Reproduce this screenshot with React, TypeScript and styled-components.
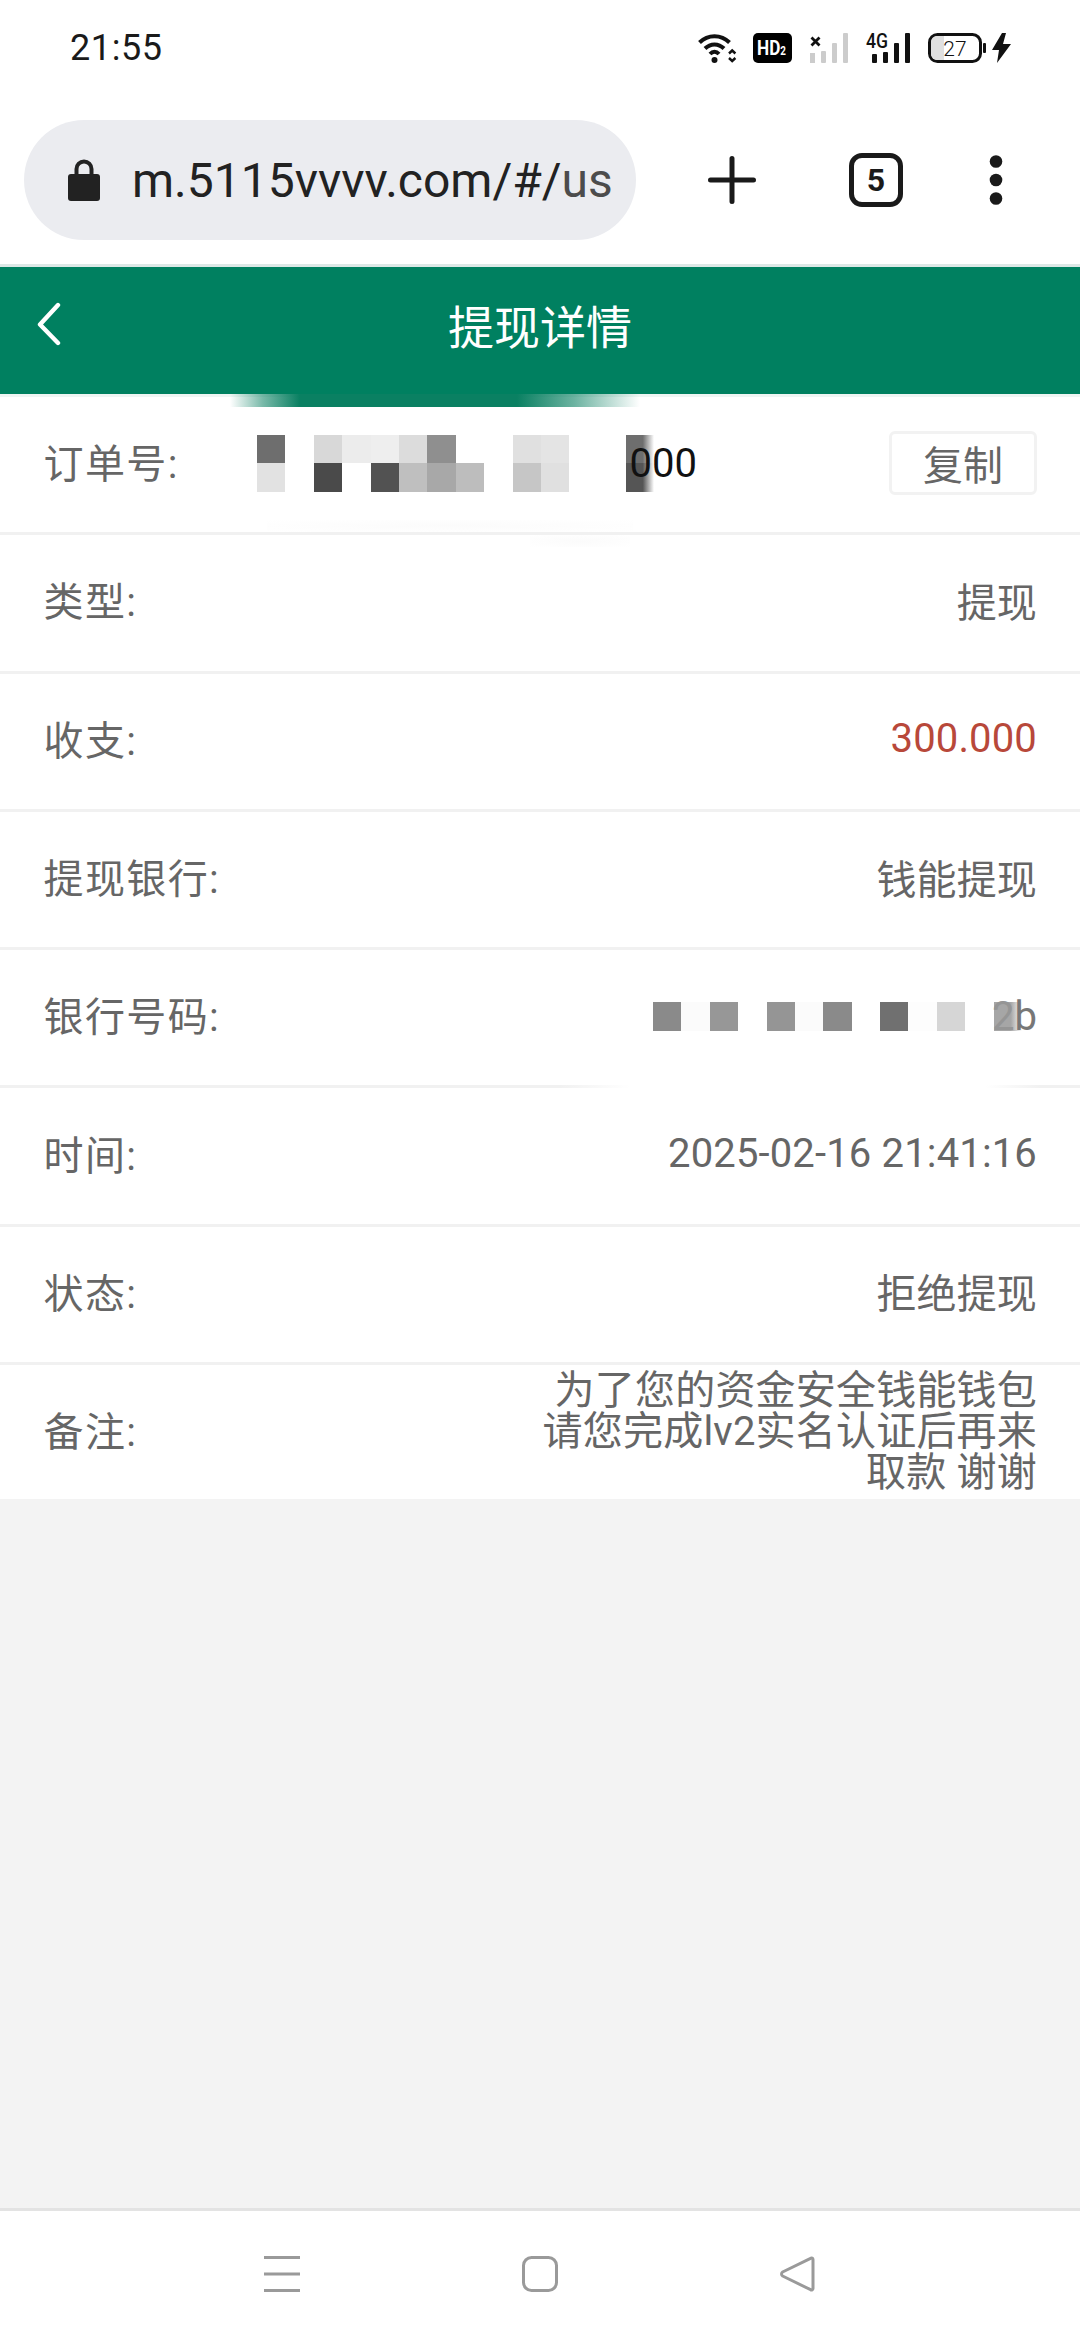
import styled, { createGlobalStyle } from 'styled-components'

const GlobalStyle = createGlobalStyle`
  html, body {
    margin: 0;
    padding: 0;
    background: #fff;
  }
  * {
    box-sizing: border-box;
  }
`

const Page = styled.div`
  width: 1080px;
  height: 2340px;
  display: flex;
  flex-direction: column;
  background: #f3f3f3;
  font-family: Roboto, "Noto Sans CJK SC", sans-serif;
  overflow: hidden;
`

const StatusBar = styled.div`
  height: 96px;
  flex: none;
  display: flex;
  align-items: center;
  justify-content: space-between;
  background: #fff;
  padding: 0 69px 0 70px;
`
const Clock = styled.span`
  font-size: 36px;
  letter-spacing: 0.6px;
  color: #1a1a1a;
`
const StatusIcons = styled.div`
  display: flex;
  align-items: flex-start;
`
const StatusIcon = styled.svg<{ $gap?: number }>`
  display: block;
  overflow: visible;
  margin-left: ${p => p.$gap ?? 0}px;
`

const UrlRow = styled.div`
  height: 168px;
  flex: none;
  display: flex;
  align-items: center;
  background: #fff;
  padding-left: 24px;
`
const UrlPill = styled.div`
  width: 612px;
  height: 120px;
  border-radius: 60px;
  background: #ebecf0;
  display: flex;
  align-items: center;
  padding-left: 44px;
`
const UrlText = styled.span`
  margin-left: 32px;
  font-size: 48px;
  color: #222;
  white-space: nowrap;
`
const UrlFade = styled.span`
  color: #4c4c4c;
`
const PlusIcon = styled.svg`
  margin-left: 72px;
`
const TabCount = styled.div`
  margin-left: 93px;
  width: 54px;
  height: 54px;
  border: 5px solid #1a1a1a;
  border-radius: 13px;
  display: flex;
  align-items: center;
  justify-content: center;
  font-size: 32px;
  font-weight: 700;
  color: #1a1a1a;
`
const MenuDots = styled.svg`
  margin-left: 86px;
`

const TopLine = styled.div`
  height: 3px;
  flex: none;
  background: #dde8e6;
`
const Header = styled.header`
  height: 127px;
  flex: none;
  background: #008060;
  display: flex;
  align-items: center;
  justify-content: center;
  position: relative;
  padding-bottom: 13px;
`
const BackIcon = styled.svg`
  position: absolute;
  left: 36px;
  top: 35px;
`
const Title = styled.h1`
  margin: 0;
  font-size: 46px;
  font-weight: 400;
  color: #fff;
`
const HeaderLine = styled.div`
  height: 3px;
  flex: none;
  background: #eef5f3;
`

// smeared edge of the blur that runs under the green bar
const Smudge = styled.div`
  position: absolute;
  z-index: 2;
  left: 230px;
  top: -3px;
  width: 410px;
  height: 13px;
  background: linear-gradient(90deg, rgba(10,128,98,0) 0%, rgba(10,128,98,0.55) 8%, rgba(10,128,98,1) 17%, rgba(10,128,98,1) 70%, rgba(10,128,98,0.6) 84%, rgba(10,128,98,0) 100%);
`

const List = styled.main`
  background: #fff;
  position: relative;
  flex: none;
`
const Row = styled.div<{ $last?: boolean; $fadedLine?: boolean }>`
  height: ${p => (p.$last ? '134px' : '138.3px')};
  display: flex;
  align-items: center;
  padding: 0 43px 3px 43.5px;
  border-bottom: ${p => (p.$last ? 'none' : '3px solid #f1f1f1')};
  ${p =>
    p.$fadedLine
      ? 'border-image: linear-gradient(90deg, #f1f1f1 560px, #fff 630px, #fff 985px, #f1f1f1 1040px) 1;'
      : ''}
  font-size: 40px;
  color: #666;
`
const Label = styled.span<{ $width?: number }>`
  flex: none;
  width: ${p => (p.$width ? `${p.$width}px` : 'auto')};
  padding-bottom: 4px;
  letter-spacing: 1.4px;
`
const Value = styled.span<{ $accent?: boolean }>`
  margin-left: auto;
  padding-bottom: 3px;
  letter-spacing: 0.15px;
  color: ${p => (p.$accent ? '#b8483a' : '#666')};
  text-align: right;
`
const Note = styled.div`
  margin-left: auto;
  margin-top: 2px;
  width: 500px;
  text-align: right;
  line-height: 41px;
  letter-spacing: 0.2px;
  color: #666;
`
const Mosaic = styled.div<{ $cols: number; $right?: boolean }>`
  flex: none;
  margin-left: ${p => (p.$right ? 'auto' : '0')};
  display: grid;
  grid-template-columns: repeat(${p => p.$cols}, 28.4px);
  grid-auto-rows: 28.5px;
`
const Cell = styled.div<{ $tone: string; $fade?: boolean }>`
  background: ${p =>
    p.$fade
      ? `linear-gradient(90deg, ${p.$tone} 60%, transparent 100%)`
      : p.$tone};
`
const MosaicTail = styled.span<{ $pull: number; $dark?: boolean }>`
  flex: none;
  margin-left: -${p => p.$pull}px;
  color: ${p => (p.$dark ? '#111' : '#777')};
`
const FaintChar = styled.span`
  color: #959595;
`
const CopyButton = styled.button`
  margin-left: auto;
  width: 148px;
  height: 64px;
  padding: 0 0 10px;
  border: 3px solid #f2f2f2;
  border-radius: 6px;
  background: #fff;
  font-family: inherit;
  font-size: 40px;
  color: #666;
`
const Wash = styled.div<{ $left: number; $top: number; $width: number }>`
  position: absolute;
  left: ${p => p.$left}px;
  top: ${p => p.$top}px;
  width: ${p => p.$width}px;
  height: 12px;
  background: radial-gradient(ellipse at center, #fbfbfb, rgba(251,251,251,0));
`

const Filler = styled.div`
  flex: 1;
  background: #f3f3f3;
`

const NavBar = styled.nav`
  height: 132px;
  flex: none;
  background: #fff;
  border-top: 3px solid #e3e3e3;
  display: flex;
  align-items: flex-start;
  padding: 45px 0 0 264px;
`
const NavIcon = styled.svg<{ $gap?: number }>`
  display: block;
  margin-left: ${p => p.$gap ?? 0}px;
`

// tones copied off the blurred areas, row by row; '' = blank cell
const orderCells = [
  ['#6e6e6e', '', '#d8d8d8', '#ececec', '#eeeeee', '#dcdcdc', '#8f8f8f', '', '', '#e0e0e0', '#e4e4e4', '', '', '#6e6e6e'],
  ['#e2e2e2', '', '#4a4a4a', '', '#525252', '#bfbfbf', '#a8a8a8', '#bdbdbd', '', '#c6c6c6', '#e0e0e0', '', '', '#555555'],
]
const bankCells = ['#8a8a8a', '#fbfbfb', '#979797', '', '#959595', '#fbfbfb', '#8a8a8a', '', '#707070', '#fdfdfd', '#d6d6d6', '', '#a6a6a6']

const App = () => {
  return (
    <Page>
      <GlobalStyle />
      <StatusBar>
        <Clock>21:55</Clock>
        <StatusIcons>
          <StatusIcon width="38" height="30" viewBox="0 0 38 30">
            <g fill="none" stroke="#111" strokeWidth="4">
              <path d="M1.5 9.5C10 1 23 1 31.5 9.5" />
              <path d="M7 15.5C12.5 10 20.5 10 26 15.5" />
              <path d="M12 21C14.8 18 18.2 18 21 21" />
            </g>
            <circle cx="16.5" cy="27" r="3" fill="#111" />
            <path d="M31 20.5l3.2-3 3.2 3M31 25l3.2 3 3.2-3" fill="none" stroke="#111" strokeWidth="2.4" />
          </StatusIcon>
          <StatusIcon $gap={17} width="39" height="30" viewBox="0 0 39 30">
            <rect width="39" height="30" rx="5" fill="#000" />
            <text transform="translate(4 22) scale(.82 1)" fontFamily="Roboto" fontWeight="700" fontSize="21" fill="#fff">
              HD<tspan fontSize="12">2</tspan>
            </text>
          </StatusIcon>
          <StatusIcon $gap={18} width="38" height="30" viewBox="0 0 38 30">
            <path d="M1.5 4.5l8 8M9.5 4.5l-8 8" stroke="#111" strokeWidth="2.8" />
            <g fill="#cccccc">
              <rect x="0" y="20" width="5" height="10" />
              <rect x="11" y="18" width="5" height="12" rx="1" />
              <rect x="22" y="10" width="5" height="20" rx="1" />
              <rect x="33" y="0" width="5" height="30" rx="1" />
            </g>
          </StatusIcon>
          <StatusIcon $gap={18} width="44" height="30" viewBox="0 0 44 30">
            <text x="0" y="15" fontFamily="Roboto" fontWeight="500" fontSize="20" fill="#111" textLength="22" lengthAdjust="spacingAndGlyphs">4G</text>
            <g fill="#111">
              <rect x="6" y="21" width="5" height="9" rx="1" />
              <rect x="17" y="19" width="5" height="11" rx="1" />
              <rect x="28" y="10" width="5" height="20" rx="1" />
              <rect x="39" y="0" width="5" height="30" rx="1" />
            </g>
          </StatusIcon>
          <StatusIcon $gap={18} width="58" height="30" viewBox="0 0 58 30">
            <rect x="1.5" y="1.5" width="51" height="27" rx="8" fill="#fff" stroke="#111" strokeWidth="3" />
            <path d="M3 9a6 6 0 0 1 6-6h7v24H9a6 6 0 0 1-6-6z" fill="#e0e0e0" />
            <rect x="55" y="10" width="3" height="10" rx="1" fill="#111" />
            <text x="27" y="23" textAnchor="middle" fontFamily="Roboto" fontWeight="300" fontSize="21" fill="#111">27</text>
          </StatusIcon>
          <StatusIcon $gap={6} width="19" height="30" viewBox="0 0 19 30">
            <path d="M10 0L0 17h7l-2 13L19 11h-8l3-11z" fill="#111" />
          </StatusIcon>
        </StatusIcons>
      </StatusBar>

      <UrlRow>
        <UrlPill>
          <svg width="32" height="42" viewBox="0 0 32 42">
            <path d="M8.5 18v-8a7.5 7.5 0 0 1 15 0v8" fill="none" stroke="#222" strokeWidth="4" />
            <rect x="0" y="15" width="32" height="27" rx="3" fill="#222" />
          </svg>
          <UrlText>m.5115vvvv.com/#/<UrlFade>us</UrlFade></UrlText>
        </UrlPill>
        <PlusIcon width="48" height="48" viewBox="0 0 48 48">
          <path d="M2.5 24h43M24 2.5v43" stroke="#1a1a1a" strokeWidth="5" strokeLinecap="round" />
        </PlusIcon>
        <TabCount>5</TabCount>
        <MenuDots width="14" height="50" viewBox="0 0 14 50">
          <circle cx="7" cy="6.5" r="6.3" fill="#1a1a1a" />
          <circle cx="7" cy="25" r="6.3" fill="#1a1a1a" />
          <circle cx="7" cy="43.5" r="6.3" fill="#1a1a1a" />
        </MenuDots>
      </UrlRow>

      <TopLine />
      <Header>
        <BackIcon width="26" height="44" viewBox="0 0 26 44">
          <path d="M22 3L4 22.5 22 41" fill="none" stroke="#fff" strokeWidth="4.4" strokeLinecap="round" strokeLinejoin="round" />
        </BackIcon>
        <Title>提现详情</Title>
      </Header>
      <HeaderLine />

      <List>
        <Smudge />
        <Row>
          <Label $width={213.5}>订单号:</Label>
          <Mosaic $cols={14}>
            {orderCells.flat().map((tone, i) => (
              <Cell key={i} $tone={tone || 'transparent'} $fade={i === 13 || i === 27} />
            ))}
          </Mosaic>
          <MosaicTail $pull={25} $dark>000</MosaicTail>
          <CopyButton>复制</CopyButton>
        </Row>
        <Wash $left={267} $top={123} $width={366} />
        <Wash $left={530} $top={138} $width={100} />
        <Row>
          <Label>类型:</Label>
          <Value>提现</Value>
        </Row>
        <Row>
          <Label>收支:</Label>
          <Value $accent>300.000</Value>
        </Row>
        <Row>
          <Label>提现银行:</Label>
          <Value>钱能提现</Value>
        </Row>
        <Row $fadedLine>
          <Label>银行号码:</Label>
          <Mosaic $cols={13} $right>
            {bankCells.map((tone, i) => (
              <Cell key={i} $tone={tone || 'transparent'} $fade={i === 12} />
            ))}
          </Mosaic>
          <MosaicTail $pull={30}><FaintChar>2</FaintChar>b</MosaicTail>
        </Row>
        <Row>
          <Label>时间:</Label>
          <Value>2025-02-16 21:41:16</Value>
        </Row>
        <Row>
          <Label>状态:</Label>
          <Value>拒绝提现</Value>
        </Row>
        <Row $last>
          <Label>备注:</Label>
          <Note>为了您的资金安全钱能钱包请您完成lv2实名认证后再来取款 谢谢</Note>
        </Row>
      </List>
      <Filler />

      <NavBar>
        <NavIcon width="36" height="36" viewBox="0 0 36 36">
          <path d="M0 1.5h36M0 18h36M0 34.5h36" stroke="#9a9a9a" strokeWidth="3" />
        </NavIcon>
        <NavIcon $gap={222} width="36" height="36" viewBox="0 0 36 36">
          <rect x="1.5" y="1.5" width="33" height="33" rx="8" fill="none" stroke="#9a9a9a" strokeWidth="3" />
        </NavIcon>
        <NavIcon $gap={222} width="36" height="36" viewBox="0 0 36 36">
          <path d="M33 3.5v29a1.5 1.5 0 0 1-2.4 1.2L2.6 20a2.4 2.4 0 0 1 0-4L30.6 2.3A1.5 1.5 0 0 1 33 3.5z" fill="none" stroke="#9a9a9a" strokeWidth="3" strokeLinejoin="round" />
        </NavIcon>
      </NavBar>
    </Page>
  )
}

export default App
